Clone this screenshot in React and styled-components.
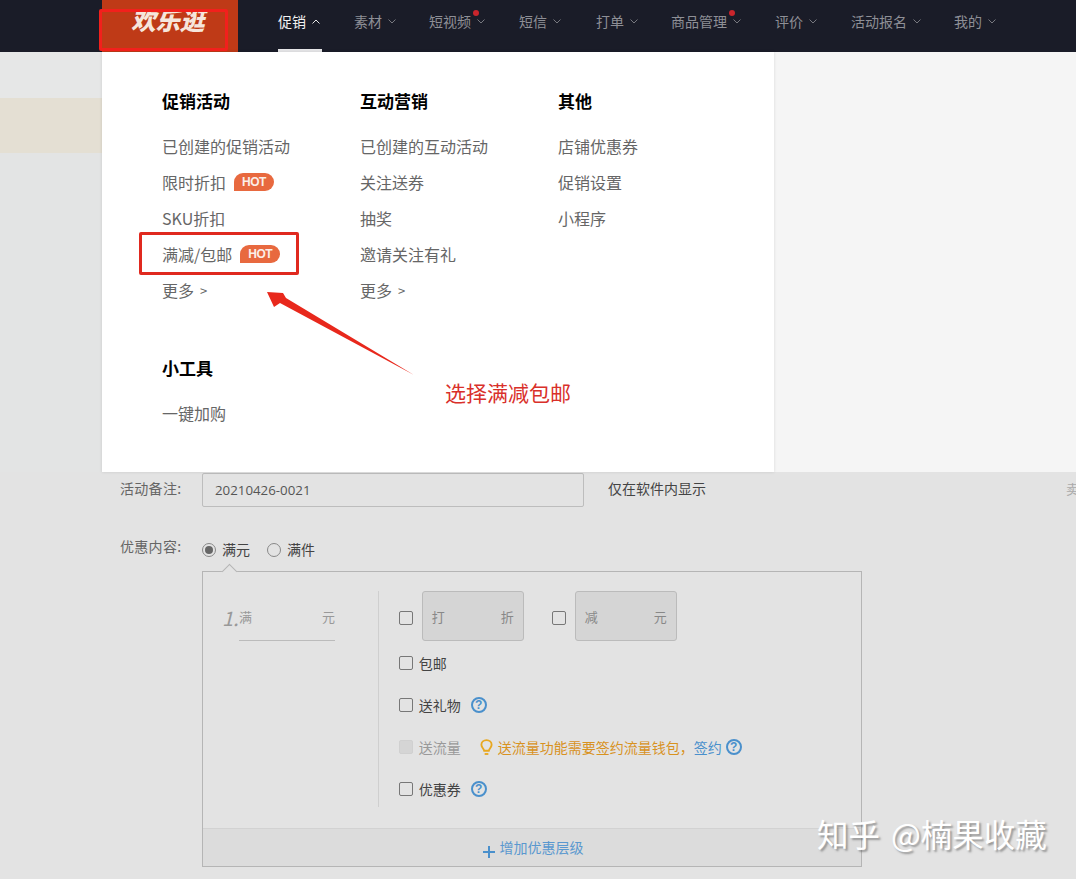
import React from 'react';
import styled, { createGlobalStyle } from 'styled-components';

const FONT = `"Noto Sans CJK SC", "Liberation Sans", sans-serif`;

const Global = createGlobalStyle`
  html, body {
    margin: 0;
    padding: 0;
    background: #e3e3e3;
    font-family: ${FONT};
  }
  * { box-sizing: border-box; }
`;

const Page = styled.div`
  position: relative;
  width: 1076px;
  height: 879px;
  overflow: hidden;
  background: #e3e3e3;
`;

const TopBar = styled.header`
  display: flex;
  height: 52px;
  padding-left: 102px;
  background: #1a1c28;
`;

const Logo = styled.div`
  width: 136px;
  padding: 4px 0 0 29px;
  background: #bf3a17;
  color: #f6e6dc;
  font-size: 24.5px;
  line-height: 32px;
  font-weight: 900;
  font-style: italic;
`;

const Nav = styled.nav`
  display: flex;
  margin-left: 40px;
`;

const NavItem = styled.div`
  position: relative;
  display: flex;
  align-items: flex-start;
  height: 52px;
  padding-top: 11px;
  margin-right: ${p => p.$gap || 34}px;
  color: ${p => (p.$active ? '#f2f2f2' : '#8e8f96')};
  font-size: 14px;
  line-height: 20px;
  white-space: nowrap;
  ${p => p.$active && 'padding-right: 2px; border-bottom: 3px solid #e6e6e8;'}
`;

const Caret = styled.svg`
  width: 8px;
  height: 5px;
  margin: 8px 0 0 6px;
  fill: none;
  stroke: ${p => (p.$active ? '#e6e6e6' : '#77787f')};
  stroke-width: 1;
`;

const Dot = styled.span`
  position: absolute;
  top: 10px;
  right: 6px;
  width: 6px;
  height: 6px;
  border-radius: 50%;
  background: #c9252c;
`;

const Stage = styled.div`
  display: flex;
  height: 420px;
`;

const Gutter = styled.div`
  display: flex;
  flex-direction: column;
  width: 102px;
  background: #e3e4e4;
`;

const GutterTop = styled.div`
  height: 46px;
  background: #e6e7e7;
`;

const GutterBand = styled.div`
  height: 55px;
  background: #e4dfd3;
`;

const Dropdown = styled.section`
  position: relative;
  width: 672px;
  padding: 36px 0 0 60px;
  background: #fff;
  box-shadow: 0 0 3px rgba(0, 0, 0, 0.12);
`;

const RightPane = styled.div`
  flex: 1;
  background: #f5f5f5;
`;

const Columns = styled.div`
  display: grid;
  grid-template-columns: repeat(3, 198px);
`;

const Group = styled.div`
  display: flex;
  flex-direction: column;
`;

const GroupTitle = styled.h3`
  margin: 0 0 14px;
  height: 26px;
  color: #000;
  font-size: 17px;
  line-height: 26px;
  font-weight: 700;
`;

const MenuItem = styled.div`
  display: flex;
  align-items: center;
  height: 36px;
  color: #666;
  font-size: 16px;
  white-space: nowrap;
`;

const Hot = styled.span`
  display: inline-flex;
  align-items: center;
  justify-content: center;
  width: 40px;
  height: 18px;
  margin-left: 8px;
  border-radius: 9px 9px 9px 0;
  background: #e8693f;
  color: #fbeee8;
  font-family: "Liberation Sans", sans-serif;
  font-size: 12px;
  font-weight: 700;
  letter-spacing: -0.5px;
`;

const MoreArrow = styled.span`
  margin-left: 6px;
  font-size: 13px;
`;

const ToolsGroup = styled(Group)`
  margin-top: 47px;
`;

const Form = styled.section`
  padding-top: 1px;
  padding-left: 120px;
`;

const Row = styled.div`
  display: flex;
  align-items: center;
`;

const FieldLabel = styled.label`
  flex: none;
  width: 82px;
  margin-top: ${p => p.$lift || -4}px;
  color: #666;
  font-size: 14px;
  line-height: 20px;
  letter-spacing: 0.3px;
`;

const TextInput = styled.div`
  flex: none;
  display: flex;
  align-items: center;
  width: 382px;
  height: 34px;
  padding-left: 12px;
  border: 1px solid #bdbdbd;
  border-radius: 2px;
  color: #555;
  font-size: 13.3px;
  font-family: "Open Sans", "Liberation Sans", sans-serif;
`;

const Hint = styled.span`
  flex: none;
  margin: -4px 0 0 24px;
  color: #444;
  font-size: 14px;
  white-space: nowrap;
`;

const CutOff = styled.span`
  flex: none;
  margin: -4px 0 0 360px;
  color: #aaa;
  font-size: 13px;
`;

const ChoiceRow = styled(Row)`
  height: 20px;
  margin-top: 33px;
`;

const Radio = styled.span`
  flex: none;
  display: flex;
  align-items: center;
  justify-content: center;
  width: 14px;
  height: 14px;
  margin-left: ${p => p.$left || 0}px;
  border: 1px solid #888;
  border-radius: 50%;
  &::after {
    content: '';
    display: ${p => (p.$on ? 'block' : 'none')};
    width: 8px;
    height: 8px;
    border-radius: 50%;
    background: #666;
  }
`;

const ChoiceText = styled.span`
  margin: -2px 0 0 6px;
  color: #444;
  font-size: 14px;
  line-height: 20px;
`;

const Panel = styled.div`
  position: relative;
  width: 660px;
  height: 296px;
  margin: 11px 0 0 82px;
  border: 1px solid #b5b5b5;
  display: flex;
  flex-direction: column;
`;

const Notch = styled.span`
  position: absolute;
  top: -6px;
  left: 21px;
  width: 11px;
  height: 11px;
  background: #e3e3e3;
  border-left: 1px solid #b5b5b5;
  border-top: 1px solid #b5b5b5;
  transform: rotate(45deg);
`;

const PanelBody = styled.div`
  flex: 1;
  display: flex;
  padding: 19px 0 0 19px;
`;

const Tier = styled.div`
  display: flex;
  width: 156px;
  height: 50px;
  padding-top: 14px;
`;

const TierNo = styled.span`
  width: 17px;
  color: #999;
  font-size: 20px;
  line-height: 26px;
  font-style: italic;
`;

const TierField = styled.div`
  display: flex;
  justify-content: space-between;
  width: 96px;
  height: 36px;
  border-bottom: 1px solid #bbb;
  color: #999;
  font-size: 13px;
  line-height: 24px;
`;

const Options = styled.div`
  width: 484px;
  height: 216px;
  padding-left: 20px;
  border-left: 1px solid #cfcfcf;
`;

const DiscountRow = styled.div`
  display: flex;
  align-items: center;
  height: 50px;
`;

const Check = styled.span`
  flex: none;
  width: 14px;
  height: 14px;
  border: 1px solid #777;
  border-radius: 2px;
  ${p => p.$disabled && 'border-color: #d0d0d0; background: #d5d5d5;'}
`;

const DiscountCheck = styled(Check)`
  margin-top: 4px;
`;

const Discount = styled.div`
  display: flex;
  align-items: center;
  justify-content: space-between;
  width: 102px;
  height: 50px;
  margin: 0 28px 0 9px;
  padding: 0 9px;
  border: 1px solid #bbb;
  border-radius: 3px;
  background: #d5d5d5;
  color: #888;
  font-size: 13px;
`;

const OptionRow = styled.div`
  display: flex;
  align-items: center;
  height: 20px;
  margin-top: ${p => p.$top || 22}px;
`;

const OptionText = styled.span`
  margin-left: 6px;
  color: ${p => (p.$muted ? '#999' : '#444')};
  font-size: 14px;
  line-height: 20px;
`;

const HelpIcon = styled.span`
  display: inline-flex;
  align-items: center;
  justify-content: center;
  width: 16px;
  height: 16px;
  margin-left: ${p => p.$left || 10}px;
  border: 2px solid #4a90cc;
  border-radius: 50%;
  color: #4a90cc;
  font-size: 12px;
  font-weight: 700;
  line-height: 1;
  font-family: "Liberation Sans", sans-serif;
`;

const Bulb = styled.svg`
  flex: none;
  width: 13px;
  height: 17px;
  margin: 0 5px 0 19px;
  fill: none;
  stroke: #e8a820;
  stroke-width: 2;
`;

const Warning = styled.span`
  color: #d8921f;
  font-size: 14px;
  white-space: nowrap;
`;

const SignLink = styled.span`
  color: #4a90cc;
  font-size: 14px;
  white-space: nowrap;
`;

const PanelFooter = styled.div`
  display: flex;
  align-items: center;
  justify-content: center;
  height: 38px;
  padding-left: 2px;
  border-top: 1px solid #d2d2d2;
  background: #dcdcdc;
`;

const PlusIcon = styled.svg`
  width: 12px;
  height: 12px;
  margin: 8px 5px 0 0;
  stroke: #4a90cc;
  stroke-width: 2;
`;

const FooterLink = styled.span`
  margin-top: -2px;
  color: #5a98cf;
  font-size: 14px;
`;

/* annotations drawn on top of the screenshot */
const LogoMarker = styled.div`
  position: absolute;
  left: 99px;
  top: 9px;
  width: 129px;
  height: 42px;
  border: 3px solid #f2201c;
  border-radius: 2px;
`;

const ItemMarker = styled.div`
  position: absolute;
  left: 139px;
  top: 232px;
  width: 160px;
  height: 43px;
  border: 3px solid #e0291f;
  border-radius: 2px;
`;

const ArrowMark = styled.svg`
  position: absolute;
  left: 260px;
  top: 285px;
  width: 160px;
  height: 95px;
`;

const Annotation = styled.div`
  position: absolute;
  left: 445px;
  top: 376px;
  color: #d9302a;
  font-size: 21px;
  line-height: 32px;
`;

const Watermark = styled.div`
  position: absolute;
  left: 817px;
  top: 811px;
  color: #fff;
  font-size: 31.5px;
  line-height: 44px;
  word-spacing: 4px;
  white-space: nowrap;
  text-shadow: 2px 2px 2px rgba(90, 90, 90, 0.55);
`;

const navItems = [
  { label: '促销', active: true, gap: 32 },
  { label: '素材', gap: 33 },
  { label: '短视频', dot: true },
  { label: '短信', gap: 35 },
  { label: '打单', gap: 33 },
  { label: '商品管理', dot: true },
  { label: '评价' },
  { label: '活动报名', gap: 33 },
  { label: '我的' },
];

const CaretIcon = ({ active }) => (
  <Caret $active={active} viewBox="0 0 8 5">
    <path d={active ? 'M0.5 4.5 L4 1 L7.5 4.5' : 'M0.5 0.5 L4 4 L7.5 0.5'} />
  </Caret>
);

const Help = ({ left }) => <HelpIcon $left={left}>?</HelpIcon>;

export default function App() {
  return (
    <Page>
      <Global />
      <TopBar>
        <Logo>欢乐逛</Logo>
        <Nav>
          {navItems.map(item => (
            <NavItem key={item.label} $active={item.active} $gap={item.gap}>
              {item.label}
              <CaretIcon active={item.active} />
              {item.dot && <Dot />}
            </NavItem>
          ))}
        </Nav>
      </TopBar>

      <Stage>
        <Gutter>
          <GutterTop />
          <GutterBand />
        </Gutter>
        <Dropdown>
          <Columns>
            <Group>
              <GroupTitle>促销活动</GroupTitle>
              <MenuItem>已创建的促销活动</MenuItem>
              <MenuItem>限时折扣<Hot>HOT</Hot></MenuItem>
              <MenuItem>SKU折扣</MenuItem>
              <MenuItem>满减/包邮<Hot>HOT</Hot></MenuItem>
              <MenuItem>更多<MoreArrow>&gt;</MoreArrow></MenuItem>
            </Group>
            <Group>
              <GroupTitle>互动营销</GroupTitle>
              <MenuItem>已创建的互动活动</MenuItem>
              <MenuItem>关注送券</MenuItem>
              <MenuItem>抽奖</MenuItem>
              <MenuItem>邀请关注有礼</MenuItem>
              <MenuItem>更多<MoreArrow>&gt;</MoreArrow></MenuItem>
            </Group>
            <Group>
              <GroupTitle>其他</GroupTitle>
              <MenuItem>店铺优惠券</MenuItem>
              <MenuItem>促销设置</MenuItem>
              <MenuItem>小程序</MenuItem>
            </Group>
          </Columns>
          <ToolsGroup>
            <GroupTitle>小工具</GroupTitle>
            <MenuItem>一键加购</MenuItem>
          </ToolsGroup>
        </Dropdown>
        <RightPane />
      </Stage>

      <Form>
        <Row>
          <FieldLabel>活动备注:</FieldLabel>
          <TextInput>20210426-0021</TextInput>
          <Hint>仅在软件内显示</Hint>
          <CutOff>卖</CutOff>
        </Row>
        <ChoiceRow>
          <FieldLabel $lift={-8}>优惠内容:</FieldLabel>
          <Radio $on />
          <ChoiceText>满元</ChoiceText>
          <Radio $left={17} />
          <ChoiceText>满件</ChoiceText>
        </ChoiceRow>
        <Panel>
          <Notch />
          <PanelBody>
            <Tier>
              <TierNo>1.</TierNo>
              <TierField>
                <span>满</span>
                <span>元</span>
              </TierField>
            </Tier>
            <Options>
              <DiscountRow>
                <DiscountCheck />
                <Discount><span>打</span><span>折</span></Discount>
                <DiscountCheck />
                <Discount><span>减</span><span>元</span></Discount>
              </DiscountRow>
              <OptionRow $top={12}>
                <Check />
                <OptionText>包邮</OptionText>
              </OptionRow>
              <OptionRow>
                <Check />
                <OptionText>送礼物</OptionText>
                <Help />
              </OptionRow>
              <OptionRow>
                <Check $disabled />
                <OptionText $muted>送流量</OptionText>
                <Bulb viewBox="0 0 14 18">
                  <path d="M4.5 12.5 C4 10 1.5 9 1.5 6 A5.5 5 0 0 1 12.5 6 C12.5 9 10 10 9.5 12.5 Z" />
                  <path d="M5 16 H9" />
                </Bulb>
                <Warning>送流量功能需要签约流量钱包，</Warning>
                <SignLink>签约</SignLink>
                <Help left={4} />
              </OptionRow>
              <OptionRow>
                <Check />
                <OptionText>优惠券</OptionText>
                <Help />
              </OptionRow>
            </Options>
          </PanelBody>
          <PanelFooter>
            <PlusIcon viewBox="0 0 12 12">
              <path d="M6 0 V12 M0 6 H12" />
            </PlusIcon>
            <FooterLink>增加优惠层级</FooterLink>
          </PanelFooter>
        </Panel>
      </Form>

      <LogoMarker />
      <ItemMarker />
      <ArrowMark viewBox="0 0 160 95">
        <path d="M7 7 L23 8 L26 13 L154 90 L20 18 L14 22 Z" fill="#e8281c" />
      </ArrowMark>
      <Annotation>选择满减包邮</Annotation>
      <Watermark>知乎 @楠果收藏</Watermark>
    </Page>
  );
}
